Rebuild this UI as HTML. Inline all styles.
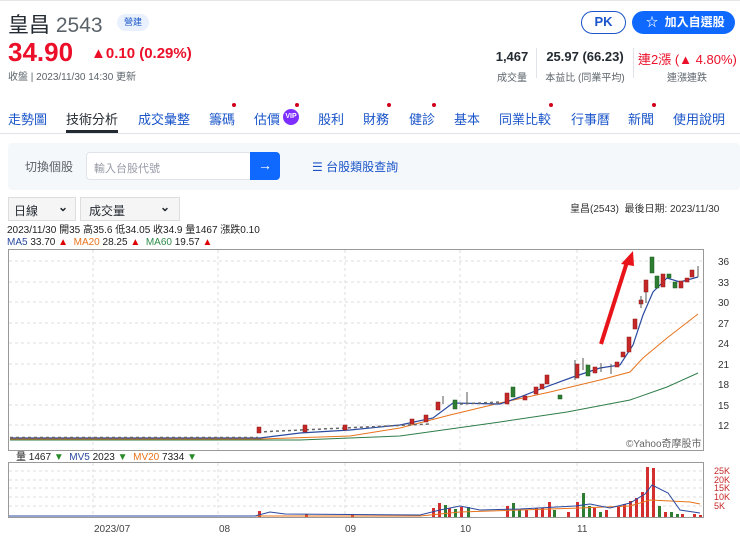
<!DOCTYPE html>
<html><head><meta charset="utf-8"><style>
*{margin:0;padding:0;box-sizing:border-box}
body{width:740px;height:539px;background:#fff;font-family:"Liberation Sans","Noto Sans CJK TC",sans-serif;position:relative;overflow:hidden;color:#232a31}
.a{position:absolute;white-space:nowrap}
.tab{position:absolute;top:109px;font-size:13px;color:#1a55c9}
.dot{position:absolute;width:4px;height:4px;border-radius:50%;background:#d0021b}
.st{font-size:13px;font-weight:bold;text-align:center}
.sl{font-size:10px;color:#5b636a;text-align:center}
</style></head><body>
<div class="a" style="left:0;top:0;width:740px;height:1px;background:#e6e6e6"></div>
<div class="a" style="left:8px;top:9px;font-size:21px;color:#232a31">皇昌 <span style="color:#5b636a">2543</span></div>
<div class="a" style="left:117px;top:14px;width:32px;height:17px;border-radius:9px;background:#e8f1fd;color:#1a55c9;font-size:9px;text-align:center;line-height:17px">營建</div>
<div class="a" style="left:8px;top:37px;font-size:26px;font-weight:bold;color:#eb0f29">34.90</div>
<div class="a" style="left:91px;top:45px;font-size:15px;font-weight:bold;color:#eb0f29">▲0.10 (0.29%)</div>
<div class="a" style="left:8px;top:68px;font-size:10px;color:#5b636a">收盤 | 2023/11/30 14:30 更新</div>
<div class="a" style="left:581px;top:11px;width:45px;height:23px;border:1.5px solid #1a55c9;border-radius:12px;color:#1a55c9;font-size:13px;font-weight:bold;text-align:center;line-height:20px">PK</div>
<div class="a" style="left:632px;top:11px;width:103px;height:23px;background:#0f69ff;border-radius:12px;color:#fff;font-size:12px;font-weight:bold;line-height:23px;padding-left:14px">☆ &nbsp;加入自選股</div>
<div class="a st" style="left:490px;top:49px;width:44px">1,467</div>
<div class="a sl" style="left:490px;top:69px;width:44px">成交量</div>
<div class="a" style="left:536px;top:48px;width:1px;height:30px;background:#e0e4e9"></div>
<div class="a st" style="left:540px;top:49px;width:90px">25.97 (66.23)</div>
<div class="a sl" style="left:540px;top:69px;width:90px">本益比 (同業平均)</div>
<div class="a" style="left:633px;top:48px;width:1px;height:30px;background:#e0e4e9"></div>
<div class="a st" style="left:638px;top:49px;width:98px;color:#eb0f29;font-weight:normal">連2漲 (▲ 4.80%)</div>
<div class="a sl" style="left:638px;top:69px;width:98px">連漲連跌</div>

<div class="tab" style="left:8px">走勢圖</div>
<div class="tab" style="left:66px;color:#232a31">技術分析</div>
<div class="a" style="left:66px;top:130px;width:52px;height:3px;background:#232a31"></div>
<div class="tab" style="left:138px">成交彙整</div>
<div class="tab" style="left:209px">籌碼</div><div class="dot" style="left:232px;top:103px"></div>
<div class="tab" style="left:254px">估價</div>
<div class="a" style="left:283px;top:109px;width:16px;height:16px;border-radius:50%;background:#7d2eff;color:#fff;font-size:7px;font-weight:bold;text-align:center;line-height:16px">VIP</div><div class="dot" style="left:295px;top:103px"></div>
<div class="tab" style="left:318px">股利</div>
<div class="tab" style="left:363px">財務</div><div class="dot" style="left:387px;top:103px"></div>
<div class="tab" style="left:409px">健診</div><div class="dot" style="left:432px;top:103px"></div>
<div class="tab" style="left:454px">基本</div>
<div class="tab" style="left:499px">同業比較</div><div class="dot" style="left:549px;top:103px"></div>
<div class="tab" style="left:571px">行事曆</div>
<div class="tab" style="left:628px">新聞</div><div class="dot" style="left:652px;top:103px"></div>
<div class="tab" style="left:673px">使用說明</div>
<div class="a" style="left:0;top:133px;width:740px;height:1px;background:#e0e4e9"></div>

<div class="a" style="left:8px;top:143px;width:732px;height:47px;background:#f5f8fb;border-radius:4px"></div>
<div class="a" style="left:25px;top:158px;font-size:12px;color:#5b636a">切換個股</div>
<div class="a" style="left:86px;top:152px;width:166px;height:28px;background:#fff;border:1px solid #e0e4e9;border-radius:4px;font-size:11px;color:#979ba7;padding:7px 0 0 7px">輸入台股代號</div>
<div class="a" style="left:250px;top:152px;width:30px;height:28px;background:#0f69ff;border-radius:0 4px 4px 0;color:#fff;font-size:14px;text-align:center;line-height:27px">→</div>
<div class="a" style="left:312px;top:158px;font-size:12px;color:#1a55c9">☰ 台股類股查詢</div>

<div class="a" style="left:8px;top:197px;width:68px;height:24px;background:#f5f5f5;border:1px solid #ddd;font-size:12px;padding:4px 0 0 5px">日線<span style="position:absolute;right:7px;top:2px;font-size:12px;font-weight:bold">⌄</span></div>
<div class="a" style="left:80px;top:197px;width:100px;height:24px;background:#f5f5f5;border:1px solid #ddd;font-size:12px;padding:4px 0 0 8px">成交量<span style="position:absolute;right:9px;top:2px;font-size:12px;font-weight:bold">⌄</span></div>
<div class="a" style="left:570px;top:200px;font-size:10px;color:#333">皇昌(2543) &nbsp;最後日期: 2023/11/30</div>
<div class="a" style="left:7px;top:225px;font-size:10px;color:#222;line-height:11px">2023/11/30 開35 高35.6 低34.05 收34.9 量1467 漲跌0.10</div>
<div class="a" style="left:7px;top:237px;font-size:10px;color:#222;line-height:11px"><span style="color:#2a4aa0">MA5</span> 33.70 <span style="color:#d00">▲</span> &nbsp;<span style="color:#e8731b">MA20</span> 28.25 <span style="color:#d00">▲</span> &nbsp;<span style="color:#2e8b4a">MA60</span> 19.57 <span style="color:#d00">▲</span></div>
<div class="a" style="left:16px;top:452px;font-size:10px;color:#222;line-height:11px">量 1467 <span style="color:#2a8a2a">▼</span> &nbsp;<span style="color:#2a4aa0">MV5</span> 2023 <span style="color:#2a8a2a">▼</span> &nbsp;<span style="color:#e8731b">MV20</span> 7334 <span style="color:#2a8a2a">▼</span></div>

<svg class="a" style="left:0;top:0" width="740" height="539" font-family="Liberation Sans,sans-serif">
<rect x="8.5" y="249.5" width="695" height="201" fill="#fff" stroke="#999"/>
<g stroke="#ddd" stroke-dasharray="3 3">
<line x1="9" x2="703" y1="261" y2="261"/><line x1="9" x2="703" y1="282" y2="282"/><line x1="9" x2="703" y1="302" y2="302"/><line x1="9" x2="703" y1="323" y2="323"/><line x1="9" x2="703" y1="343" y2="343"/><line x1="9" x2="703" y1="364" y2="364"/><line x1="9" x2="703" y1="384" y2="384"/><line x1="9" x2="703" y1="405" y2="405"/><line x1="9" x2="703" y1="425" y2="425"/>
<line x1="93" x2="93" y1="250" y2="450"/><line x1="218" x2="218" y1="250" y2="450"/><line x1="345" x2="345" y1="250" y2="450"/><line x1="460" x2="460" y1="250" y2="450"/><line x1="577" x2="577" y1="250" y2="450"/>
</g>
<g font-size="10" fill="#333"><text x="718" y="265">36</text><text x="718" y="286">33</text><text x="718" y="306">30</text><text x="718" y="327">27</text><text x="718" y="347">24</text><text x="718" y="368">21</text><text x="718" y="388">18</text><text x="718" y="409">15</text><text x="718" y="429">12</text></g>
<text x="626" y="447" font-size="10" fill="#666">©Yahoo奇摩股市</text>
<polyline fill="none" stroke="#2e7d4a" stroke-width="1" points="10,440 300,440 350,438 400,436 500,422 567,412 630,400 667,387 698,373"/>
<polyline fill="none" stroke="#e8731b" stroke-width="1" points="10,439 260,439 350,436 400,428 450,415 500,403 550,392 600,380 630,372 643,358 667,338 698,314"/>
<polyline fill="none" stroke="#2a4aa0" stroke-width="1.2" points="10,438 260,438 300,433 350,430 400,425 433,418 453,403 500,404 520,397 543,388 573,377 600,368 620,365 633,345 643,315 653,292 667,278 680,282 698,277"/>
<line x1="10" x2="258" y1="437.5" y2="437.5" stroke="#666" stroke-width="1.5" stroke-dasharray="3 3"/>
<line x1="258" x2="430" y1="432" y2="424" stroke="#666" stroke-width="1.5" stroke-dasharray="3 3"/>
<line x1="460" x2="500" y1="404" y2="402" stroke="#666" stroke-width="1.5" stroke-dasharray="3 3"/>
<g fill="#c62828" stroke="#8b1a1a" stroke-width="0.5">
<rect x="257" y="427" width="4" height="6"/><rect x="303" y="425" width="4" height="7"/><rect x="343" y="425" width="4" height="5"/><rect x="410" y="419" width="4" height="5"/><rect x="424" y="415" width="4" height="7"/>
<rect x="436" y="402" width="4" height="8"/><rect x="505" y="393" width="4" height="11"/><rect x="523" y="396" width="4" height="4"/><rect x="534" y="387" width="4" height="7"/><rect x="540" y="384" width="4" height="5"/><rect x="545" y="375" width="4" height="9"/><rect x="575" y="364" width="4" height="14"/><rect x="593" y="367" width="4" height="6"/><rect x="615" y="362" width="4" height="5"/><rect x="621" y="352" width="4" height="5"/><rect x="627" y="337" width="4" height="15"/><rect x="633" y="319" width="4" height="10"/><rect x="639" y="300" width="4" height="4"/><rect x="644" y="280" width="4" height="12"/><rect x="661" y="274" width="4" height="13"/><rect x="679" y="281" width="4" height="7"/><rect x="685" y="278" width="4" height="4"/><rect x="690" y="270" width="4" height="7"/>
</g>
<g fill="#2e7d32" stroke="#1b5e20" stroke-width="0.5">
<rect x="453" y="400" width="4" height="9"/><rect x="511" y="387" width="4" height="10"/><rect x="558" y="395" width="4" height="4"/><rect x="586" y="365" width="4" height="11"/><rect x="650" y="257" width="4" height="16"/><rect x="655" y="276" width="4" height="12"/><rect x="667" y="274" width="4" height="4"/><rect x="673" y="282" width="4" height="6"/>
</g>
<g stroke="#555" stroke-width="1"><line x1="443" y1="396" x2="443" y2="404"/><line x1="467" y1="392" x2="467" y2="403"/><line x1="583" y1="358" x2="583" y2="370"/><line x1="601" y1="363" x2="601" y2="372"/><line x1="611" y1="364" x2="611" y2="374"/><line x1="641" y1="296" x2="641" y2="308"/><line x1="646" y1="292" x2="646" y2="303"/><line x1="698" y1="266" x2="698" y2="277"/><line x1="575" y1="360" x2="575" y2="380"/></g>
<line x1="601" y1="344" x2="627" y2="262" stroke="#e8141a" stroke-width="4"/>
<polygon points="633,251 621,264 634,266" fill="#e8141a"/>
<rect x="8.5" y="462.5" width="695" height="55" fill="#fff" stroke="#999"/>
<g stroke="#ddd" stroke-dasharray="3 3">
<line x1="9" x2="703" y1="471" y2="471"/><line x1="9" x2="703" y1="480" y2="480"/><line x1="9" x2="703" y1="488" y2="488"/><line x1="9" x2="703" y1="497" y2="497"/><line x1="9" x2="703" y1="506" y2="506"/>
<line x1="93" x2="93" y1="463" y2="517"/><line x1="218" x2="218" y1="463" y2="517"/><line x1="345" x2="345" y1="463" y2="517"/><line x1="460" x2="460" y1="463" y2="517"/><line x1="577" x2="577" y1="463" y2="517"/>
</g>
<g font-size="9" fill="#c62828"><text x="714" y="474">25K</text><text x="714" y="483">20K</text><text x="714" y="491">15K</text><text x="714" y="500">10K</text><text x="714" y="509">5K</text></g>
<g fill="#d32f2f">
<rect x="258" y="511" width="3" height="6"/><rect x="305" y="514" width="3" height="3"/><rect x="351" y="515" width="3" height="2"/>
<rect x="432" y="508" width="3" height="9"/><rect x="438" y="503" width="3" height="14"/><rect x="448" y="508" width="3" height="9"/><rect x="460" y="507" width="3" height="10"/>
<rect x="506" y="506" width="3" height="11"/><rect x="525" y="510" width="3" height="7"/><rect x="535" y="508" width="3" height="9"/><rect x="541" y="508" width="3" height="9"/><rect x="548" y="502" width="3" height="15"/><rect x="567" y="512" width="3" height="5"/>
<rect x="576" y="502" width="3" height="15"/><rect x="593" y="508" width="3" height="9"/><rect x="605" y="510" width="3" height="7"/>
<rect x="617" y="506" width="3" height="11"/><rect x="623" y="504" width="3" height="13"/><rect x="629" y="501" width="3" height="16"/><rect x="635" y="498" width="3" height="19"/><rect x="641" y="492" width="3" height="25"/><rect x="646" y="467" width="3" height="50"/><rect x="652" y="468" width="3" height="49"/><rect x="664" y="512" width="3" height="5"/><rect x="681" y="514" width="3" height="3"/><rect x="693" y="514" width="3" height="3"/><rect x="699" y="515" width="3" height="2"/></g>
<g fill="#2e7d32">
<rect x="444" y="505" width="3" height="12"/><rect x="454" y="509" width="3" height="8"/><rect x="467" y="507" width="3" height="10"/><rect x="512" y="503" width="3" height="14"/><rect x="518" y="510" width="3" height="7"/><rect x="553" y="510" width="3" height="7"/><rect x="582" y="493" width="3" height="24"/><rect x="588" y="506" width="3" height="11"/><rect x="599" y="512" width="3" height="5"/><rect x="658" y="506" width="3" height="11"/><rect x="670" y="512" width="3" height="5"/><rect x="676" y="514" width="3" height="3"/></g>
<polyline fill="none" stroke="#e8731b" points="9,516 420,516 460,512 520,510 580,508 630,506 650,500 690,502 700,504"/>
<polyline fill="none" stroke="#2a4aa0" points="9,516 255,516 270,512 285,514 420,515 440,510 460,506 480,510 520,509 575,506 590,504 610,508 630,503 645,494 652,485 668,493 680,510 700,513"/>
<g font-size="10" fill="#444"><text x="94" y="532">2023/07</text><text x="219" y="532">08</text><text x="345" y="532">09</text><text x="460" y="532">10</text><text x="577" y="532">11</text></g>
</svg>
</body></html>
